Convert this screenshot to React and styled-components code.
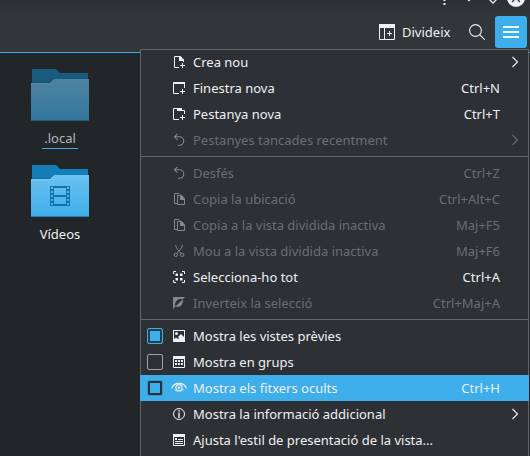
import React from 'react';
import styled, { createGlobalStyle } from 'styled-components';

const GlobalStyle = createGlobalStyle`
  * { box-sizing: border-box; }
  body {
    margin: 0;
    background: #232629;
    overflow: hidden;
    font-family: "Noto Sans", sans-serif;
    font-size: 13px;
    color: #eff0f1;
  }
  svg { display: block; flex: none; }
`;

const Window = styled.div`
  position: relative;
  width: 530px;
  height: 456px;
  overflow: hidden;
  display: flex;
  flex-direction: column;
  background: #232629;
`;

const Header = styled.header`
  height: 53px;
  flex: none;
  border-bottom: 1px solid #3daee9;
  background: linear-gradient(#2c3034, #31363b 14px);
`;

const TitleButtons = styled.div`
  height: 8px;
  display: flex;
  justify-content: flex-end;
  padding-right: 5px;
`;

const Toolbar = styled.div`
  display: flex;
  align-items: center;
  justify-content: flex-end;
  height: 32px;
  margin-top: 8px;
  padding-right: 3px;
`;

const SplitButton = styled.button`
  display: flex;
  align-items: center;
  gap: 7px;
  width: 90px;
  padding: 0;
  border: 0;
  background: none;
  color: inherit;
  font: inherit;
  white-space: nowrap;
`;

const MenuButton = styled.button`
  display: grid;
  place-items: center;
  width: 32px;
  height: 32px;
  padding: 0;
  margin-left: 10px;
  border: 0;
  border-radius: 3px;
  background: #3daee9;
`;

const Files = styled.main`
  display: flex;
  flex-direction: column;
  gap: 17px;
  width: 120px;
  padding-top: 16px;
`;

const File = styled.div`
  display: flex;
  flex-direction: column;
  align-items: center;
  height: 79px;
  & > svg { opacity: ${p => (p.$hidden ? 0.6 : 1)}; }
`;

const FileName = styled.span`
  margin-top: 8px;
  padding: 0 2px;
  height: 20px;
  line-height: 19px;
  color: ${p => (p.$hidden ? '#b4b6b8' : '#eff0f1')};
  border-bottom: 1px solid ${p => (p.$hidden ? '#3daee9' : 'transparent')};
`;

const Menu = styled.div`
  position: absolute;
  left: 140px;
  top: 49px;
  width: 389px;
  height: 420px;
  border: 1px solid #616568;
  background: #2d3035;
`;

const MenuList = styled.div`
  margin: -1px -1px 0;
`;

const Item = styled.div`
  display: flex;
  align-items: center;
  height: 26px;
  padding: 0 6px 0 7px;
  color: ${p => (p.$disabled ? '#6a6e71' : '#eff0f1')};
  background: ${p => (p.$active ? '#3daee9' : 'transparent')};
  white-space: nowrap;
  & > svg { color: ${p => (p.$disabled ? '#85888b' : '#eff0f1')}; }
  & > svg:last-child { color: ${p => (p.$disabled ? '#6a6e71' : '#eff0f1')}; }
`;

const CheckSlot = styled.span`
  width: 16px;
  height: 16px;
  margin-right: 8px;
  flex: none;
`;

const Check = styled(CheckSlot)`
  border-radius: 2px;
  border: 1px solid ${p => (p.$kind === 'on' ? '#3daee9' : '#a0a3a5')};
  ${p => p.$kind === 'on' && 'background: #3daee9; box-shadow: inset 0 0 0 2px #2a3c48;'}
  ${p => p.$kind === 'focus' && 'border: 1px solid #3496c9; box-shadow: inset 0 0 0 2px #2d3035;'}
`;

const Label = styled.span`
  flex: 1;
  margin-left: 6px;
  line-height: 18px;
`;

const Shortcut = styled.span`
  margin-right: 23px;
  line-height: 18px;
`;

const Separator = styled.div`
  height: 7px;
  padding-top: 3px;
  &::after {
    content: '';
    display: block;
    height: 1px;
    background: #616568;
  }
`;

const line = { fill: 'none', stroke: 'currentColor' };

const icons = {
  newFile: (
    <>
      <path {...line} d="M8 13.500H3.500V2.500H9L12.500 6V8" />
      <path fill="currentColor" d="M8 2h1.500l3.500 4v1H8zM11 9h1v5h-1zM9 11h5v1H9z" />
    </>
  ),
  newWindow: (
    <>
      <path {...line} d="M8 13.500H2.500V3M13.500 3V8" />
      <path fill="currentColor" d="M2 2h12v2H2zM11 9h1v5h-1zM9 11h5v1H9z" />
    </>
  ),
  newTab: (
    <>
      <path {...line} d="M8 13.500H2.500V2.500H7M10 4.500H13.500V8" />
      <path fill="currentColor" d="M6 2h5v3H6zM11 9h1v5h-1zM9 11h5v1H9z" />
    </>
  ),
  undo: (
    <path {...line} strokeWidth="1.1" d="M6.500 1.800L3.500 4.800L6.500 7.800M3.500 4.800H8.500A4.200 4.200 0 0 1 8.500 13.300H7" />
  ),
  copy: (
    <>
      <path {...line} d="M6 12.500H3.500V2.500H8L9 3.500" />
      <path {...line} d="M6.500 4.500H10L13.500 8V13.500H6.500z" />
      <path fill="currentColor" d="M9 4h1.500L14 7.500V9H9z" />
    </>
  ),
  cut: (
    <g {...line}>
      <path d="M4.500 2C5 5 8 8 10 10.500M11.500 2C11 5 8 8 6 10.500" />
      <circle cx="4.800" cy="11.800" r="1.700" />
      <circle cx="11.200" cy="11.800" r="1.700" />
    </g>
  ),
  selectAll: (
    <>
      <path {...line} d="M2.500 5V2.500H5M11 2.500H13.500V5M13.500 11V13.500H11M5 13.500H2.500V11" />
      <path fill="currentColor" d="M4.500 4.500H7V7H4.500zM9 4.500h2.500V7H9zM4.500 9H7v2.500H4.500zM9 9h2.500v2.500H9z" />
    </>
  ),
  invert: (
    <path
      fill="currentColor"
      d="M2 2H14L11.500 4.500C9.500 3.600 7 4.300 5.800 5.800C4.300 7 3.600 9.500 4.500 11.500L2 14zM11.500 4.500C12.400 6.500 11.700 9 10.200 10.200C9 11.700 6.500 12.400 4.500 11.500z"
    />
  ),
  image: (
    <path
      fill="currentColor"
      fillRule="evenodd"
      d="M2 2h12v12H2zM3 3v8l2-1.500 2 1.500 1-1-1-1 3-3 3 3V3zM4 5.500a1.500 1.500 0 1 0 3 0a1.500 1.500 0 1 0-3 0z"
    />
  ),
  groups: (
    <>
      <path {...line} d="M2.500 3V13.500H13.500V3" />
      <path fill="currentColor" d="M2 2h12v3H2zM4 6h2v2H4zM7 6h2v2H7zM10 6h2v2h-2zM4 9h2v2H4zM7 9h2v2H7zM10 9h2v2h-2z" />
    </>
  ),
  eye: (
    <g {...line}>
      <path strokeWidth="1.200" d="M.5 8.500C3 1.700 13 1.700 15.500 8.500" />
      <circle cx="8" cy="7.800" r="3.200" strokeWidth="1.200" />
      <path d="M3 9.500C4.500 11.500 11.500 11.500 13 9.500" strokeWidth=".6" />
      <circle cx="8" cy="7.800" r="1" fill="currentColor" />
    </g>
  ),
  info: (
    <>
      <circle {...line} cx="8" cy="8" r="5.500" />
      <path fill="currentColor" d="M7.300 4h1.400v1.500H7.300zM7.300 6.500h1.400V12H7.300z" />
    </>
  ),
  style: (
    <>
      <path {...line} d="M2.500 3V13.500H13.500V3" />
      <path fill="currentColor" d="M2 2h12v3H2zM4 6h2v2H4zM7 7h5v1H7zM4 9h8v1H4zM4 11h8v1H4z" />
    </>
  ),
  arrow: <path {...line} strokeWidth="1.100" d="M5.500 3L10.500 8L5.500 13" />,
  split: (
    <>
      <path {...line} d="M.5 2V15.500H15.500V2M5.500 3V15" />
      <path fill="currentColor" d="M0 0h16v4H0zM10 7h1v5h-1zM8 9h5v1H8z" />
    </>
  ),
  search: (
    <g {...line} strokeWidth="1.100">
      <circle cx="6.500" cy="6.500" r="5.900" />
      <path d="M10.700 10.700L15.700 15.700" />
    </g>
  ),
  burger: <path fill="#eff0f1" d="M0 2h16v2H0zM0 7h16v2H0zM0 12h16v2H0z" />,
};

const Icon = ({ name }) => (
  <svg width="16" height="16" viewBox="0 0 16 16">{icons[name]}</svg>
);

const Folder = ({ id, film }) => (
  <svg width="58" height="52" viewBox="0 0 58 52">
    <defs>
      <linearGradient id={id} x1="0" y1="0" x2="0" y2="1">
        <stop offset="0" stopColor="#6cc1f1" />
        <stop offset="1" stopColor="#3daee9" />
      </linearGradient>
    </defs>
    <path fill="#147eb8" d="M1 0H25L29 4H57V20H1z" />
    <path fill="#1a6797" d="M1 13H19L23 9V15H1z" />
    <path fill={`url(#${id})`} d="M0 14H19L23 10H58V52H0z" />
    <path fill="none" stroke="#8acef2" strokeOpacity=".6" d="M0 14.500H19.500L23.500 10.500" />
    <path fill="#2582b2" d="M0 51H58V52H0z" />
    {film && (
      <path
        fill="#1272ab"
        fillRule="evenodd"
        d="M19 21H39V41H19zM23 23v7h12v-7zM23 32v7h12v-7zM20 22v2h2v-2zM20 26v2h2v-2zM20 30v2h2v-2zM20 34v2h2v-2zM20 38v2h2v-2zM36 22v2h2v-2zM36 26v2h2v-2zM36 30v2h2v-2zM36 34v2h2v-2zM36 38v2h2v-2z"
      />
    )}
  </svg>
);

const rows = [
  { icon: 'newFile', label: 'Crea nou', sub: true },
  { icon: 'newWindow', label: 'Finestra nova', keys: 'Ctrl+N' },
  { icon: 'newTab', label: 'Pestanya nova', keys: 'Ctrl+T' },
  { icon: 'undo', label: 'Pestanyes tancades recentment', sub: true, disabled: true },
  null,
  { icon: 'undo', label: 'Desfés', keys: 'Ctrl+Z', disabled: true },
  { icon: 'copy', label: 'Copia la ubicació', keys: 'Ctrl+Alt+C', disabled: true },
  { icon: 'copy', label: 'Copia a la vista dividida inactiva', keys: 'Maj+F5', disabled: true },
  { icon: 'cut', label: 'Mou a la vista dividida inactiva', keys: 'Maj+F6', disabled: true },
  { icon: 'selectAll', label: 'Selecciona-ho tot', keys: 'Ctrl+A' },
  { icon: 'invert', label: 'Inverteix la selecció', keys: 'Ctrl+Maj+A', disabled: true },
  null,
  { icon: 'image', label: 'Mostra les vistes prèvies', check: 'on' },
  { icon: 'groups', label: 'Mostra en grups', check: 'off' },
  { icon: 'eye', label: 'Mostra els fitxers ocults', keys: 'Ctrl+H', check: 'focus', active: true },
  { icon: 'info', label: 'Mostra la informació addicional', sub: true },
  { icon: 'style', label: "Ajusta l'estil de presentació de la vista..." },
];

export default function App() {
  return (
    <Window>
      <GlobalStyle />
      <Header>
        <TitleButtons>
          <svg width="84" height="8" viewBox="0 0 84 8">
            <path fill="#eff0f1" d="M2.500 0h2v1h-2zM2.500 3h2v2h-2zM26.500 0h3L28 1.500z" />
            <path fill="none" stroke="#eff0f1" strokeWidth="1.300" d="M48.500 -.5L52 3L55.500 -.5" />
            <circle cx="75" cy="-2" r="9" fill="#eff0f1" />
            <path stroke="#31363b" strokeWidth="1.300" d="M75 -2L79 2M75 -2L71 2" />
          </svg>
        </TitleButtons>
        <Toolbar>
          <SplitButton><Icon name="split" />Divideix</SplitButton>
          <Icon name="search" />
          <MenuButton><Icon name="burger" /></MenuButton>
        </Toolbar>
      </Header>
      <Files>
        <File $hidden><Folder id="folder-local" /><FileName $hidden>.local</FileName></File>
        <File><Folder id="folder-videos" film /><FileName>Vídeos</FileName></File>
      </Files>
      <Menu>
        <MenuList>
          {rows.map((r, i) => r ? (
            <Item key={i} $disabled={r.disabled} $active={r.active}>
              {r.check ? <Check $kind={r.check} /> : <CheckSlot />}
              <Icon name={r.icon} />
              <Label>{r.label}</Label>
              {r.keys && <Shortcut>{r.keys}</Shortcut>}
              {r.sub && <Icon name="arrow" />}
            </Item>
          ) : <Separator key={i} />)}
        </MenuList>
      </Menu>
    </Window>
  );
}
